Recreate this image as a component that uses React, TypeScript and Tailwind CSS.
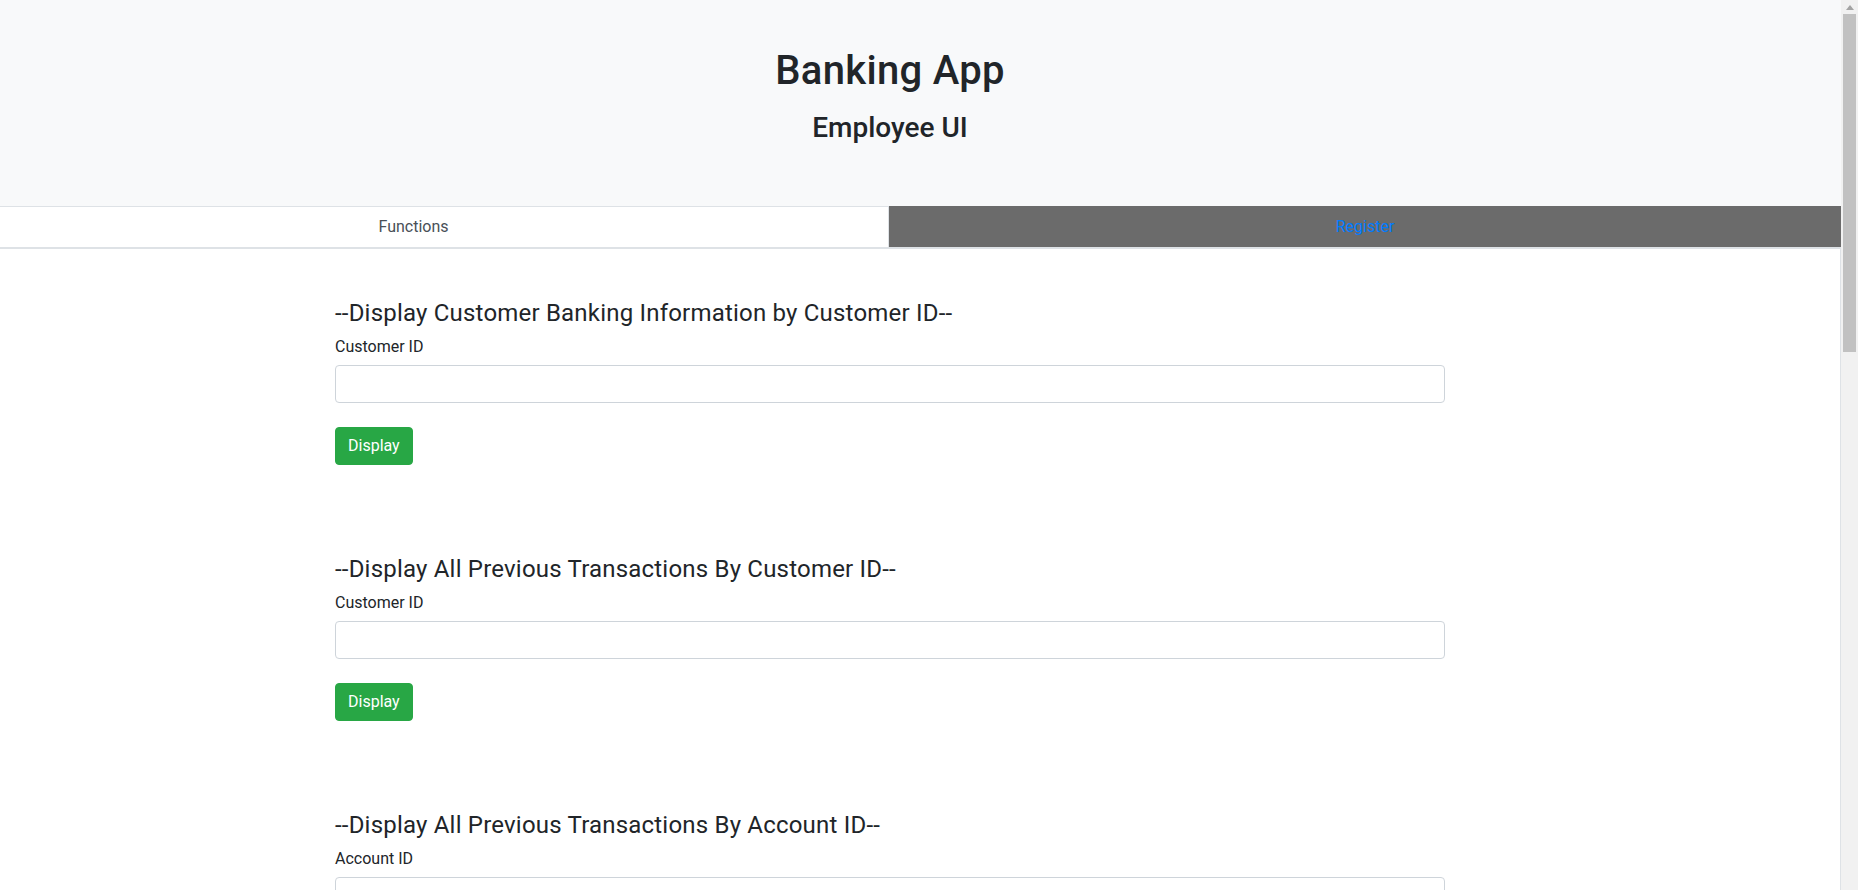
import React from 'react';

const sections = [
    { title: '--Display Customer Banking Information by Customer ID--', label: 'Customer ID' },
    { title: '--Display All Previous Transactions By Customer ID--', label: 'Customer ID' },
    { title: '--Display All Previous Transactions By Account ID--', label: 'Account ID' },
];

const Section = ({ title, label }: { title: string; label: string }) => (
    <div className="mb-[90px]">
        <h4 className="text-[24px] leading-[29px] font-normal tracking-[0.2px] text-[#212529] mb-[7px]">{title}</h4>
        <label className="block text-[16px] leading-[24px] text-[#212529] mb-[6px]">{label}</label>
        <input
            type="text"
            className="block w-full h-[38px] px-3 bg-white border border-[#ced4da] rounded-[4px] outline-none"
        />
        <button className="mt-[24px] h-[38px] px-[12px] text-[16px] leading-[24px] text-white bg-[#28a745] border border-[#28a745] rounded-[4px]">
            Display
        </button>
    </div>
);

const App = () => {
    return (
        <div
            className="flex h-[890px] w-full overflow-hidden bg-white"
            style={{ fontFamily: 'Roboto, "Liberation Sans", Arial, sans-serif' }}
        >
            <div className="flex flex-col flex-1 min-w-0">
                {/* Jumbotron */}
                <header className="h-[206px] bg-[#f8f9fa] shrink-0">
                    <div className="w-[1780px] pt-[47px] text-center text-[#212529]">
                        <h1 className="text-[40px] leading-[48px] font-medium tracking-[0.3px]">Banking App</h1>
                        <h3 className="mt-[16px] text-[28px] leading-[34px] font-medium">Employee UI</h3>
                    </div>
                </header>

                {/* Tabs */}
                <nav className="flex h-[43px] shrink-0 border-b-2 border-[#dee2e6]">
                    <div className="w-[889px] pr-[61px] flex items-center justify-center bg-white border-t border-r border-[#dee2e6] text-[16px] text-[#495057]">
                        Functions
                    </div>
                    <div className="flex-1 flex items-center justify-center bg-[#6b6b6b] text-[16px] text-[#007bff]">
                        Register
                    </div>
                </nav>

                {/* Contenu */}
                <main className="flex-1 border-r border-[#dee2e6]">
                    <div className="w-[1780px] pt-[50px]">
                        <div className="mx-auto w-[1110px]">
                            {sections.map((s, i) => (
                                <Section key={i} title={s.title} label={s.label} />
                            ))}
                        </div>
                    </div>
                </main>
            </div>

            {/* Barre de défilement */}
            <div className="w-[17px] shrink-0 bg-[#f1f1f1] flex flex-col items-center">
                <div className="h-[14px] flex items-center justify-center">
                    <svg width="8" height="5" viewBox="0 0 8 5">
                        <path d="M0 5 L4 0 L8 5 Z" fill="#a3a3a3" />
                    </svg>
                </div>
                <div className="w-[13px] h-[338px] bg-[#c1c1c1]"></div>
            </div>
        </div>
    );
};

export default App;
